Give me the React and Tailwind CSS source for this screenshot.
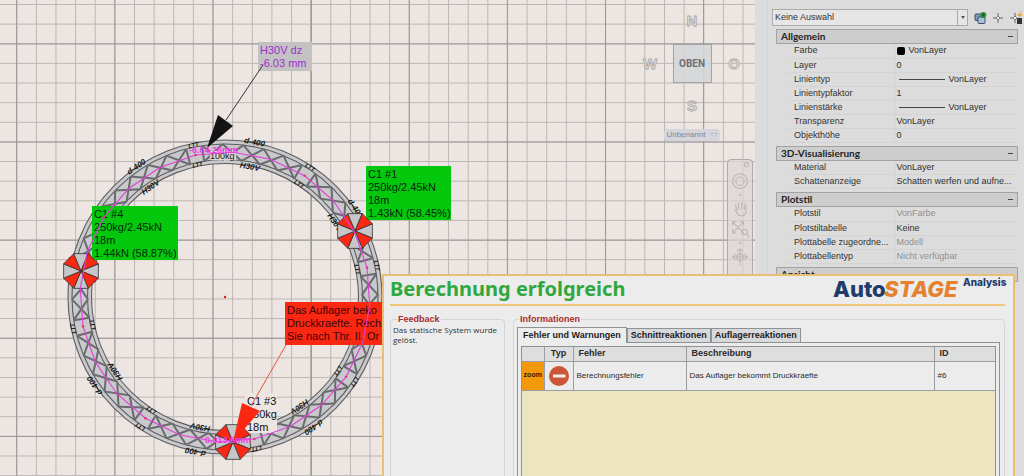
import React from "react";

const CX = 225;
const CY = 297;
const JOINTS = [0, 1, 2, 3, 4, 5, 6, 7].map((k) => -11.7 + 45 * k);

function polar(r, deg) {
  const a = (deg * Math.PI) / 180;
  return [CX + r * Math.sin(a), CY - r * Math.cos(a)];
}

function Bar({ from, to, className = "stroke-[#6a6b6e]", width = 2 }) {
  return (
    <line x1={from[0]} y1={from[1]} x2={to[0]} y2={to[1]} className={className} strokeWidth={width} />
  );
}

function RingText({ r, angle, size, children }) {
  const [x, y] = polar(r, angle);
  return (
    <text
      x={x}
      y={y}
      fontSize={size}
      textAnchor="middle"
      fontStyle="italic"
      fontWeight="bold"
      className="fill-[#161616]"
      transform={`rotate(${angle} ${x} ${y})`}
    >
      {children}
    </text>
  );
}

function TrussSegment({ start }) {
  const bays = [0, 1, 2, 3, 4];
  const step = 39 / bays.length;
  return (
    <g>
      <Bar from={polar(137, start - 3)} to={polar(153, start - 3)} />
      <Bar from={polar(137, start + 3)} to={polar(153, start + 3)} />
      {bays.map((b) => {
        const a = start + 3 + b * step;
        return (
          <g key={b}>
            <Bar from={polar(137, a)} to={polar(153, a + step)} />
            <Bar from={polar(153, a)} to={polar(137, a + step)} />
          </g>
        );
      })}
      <RingText r={155} angle={start + 22.5} size={8}>d-400</RingText>
      <RingText r={130} angle={start + 22.5} size={8}>H30V</RingText>
      <RingText r={153} angle={start} size={6}>LTT</RingText>
      <RingText r={133} angle={start} size={6}>LTT</RingText>
    </g>
  );
}

function Hoist({ x, y }) {
  const R = 18.8;
  const pt = (deg) => {
    const a = (deg * Math.PI) / 180;
    return `${x + R * Math.cos(a)},${y + R * Math.sin(a)}`;
  };
  return (
    <g strokeWidth="0.8" className="stroke-[#333333]">
      {[0, 1, 2, 3, 4, 5, 6, 7].map((k) => (
        <polygon
          key={k}
          points={`${x},${y} ${pt(k * 45 - 22.5)} ${pt(k * 45 + 22.5)}`}
          className={k % 2 ? "fill-[#fa2713]" : "fill-[#c6c5c7]"}
        />
      ))}
    </g>
  );
}

function Callout({ x, y, width, height, fill, color, lines }) {
  return (
    <g>
      <rect x={x} y={y} width={width} height={height} className={fill} />
      {lines.map((line, i) => (
        <text key={line} x={x + 2} y={y + 12 + i * 13} fontSize="11" className={color}>
          {line}
        </text>
      ))}
    </g>
  );
}

function Drawing() {
  const center = JOINTS.flatMap((a) => [polar(145, a), polar(145, a + 15), polar(145, a + 30)])
    .map((p) => p.join(","))
    .join(" ");
  return (
    <svg className="absolute inset-0 h-full w-full font-['Liberation_Sans',sans-serif]" role="img" aria-label="Grundriss">
      <defs>
        <pattern id="minor" x="16.2" y="4" width="19.63" height="19.63" patternUnits="userSpaceOnUse">
          <path d="M0.5 0V19.63M0 0.5H19.63" className="stroke-[#bcb6b4]" strokeWidth="1" fill="none" />
        </pattern>
        <pattern id="major" x="16.2" y="43.4" width="98.13" height="98.13" patternUnits="userSpaceOnUse">
          <path d="M0.5 0V98.13M0 0.5H98.13" className="stroke-[#9a9695]" strokeWidth="1" fill="none" />
        </pattern>
      </defs>
      <rect width="100%" height="100%" fill="url(#minor)" />
      <rect width="100%" height="100%" fill="url(#major)" />
      <line x1="311.3" y1="0" x2="311.3" y2="100%" className="stroke-[#7fae7c]" strokeWidth="1.2" />

      <circle cx={CX} cy={CY} r="145.5" fill="none" className="stroke-[#c9c8ca]" strokeWidth="23" />
      {[157, 153, 137.5, 133.5].map((r) => (
        <circle key={r} cx={CX} cy={CY} r={r} fill="none" className="stroke-[#5c5d60]" strokeWidth="1.1" />
      ))}
      {JOINTS.map((a) => (
        <TrussSegment key={a} start={a} />
      ))}
      <rect x="210" y="151" width="26" height="9" className="fill-[#dcd7d6]" />
      <text x="210" y="159" fontSize="9" className="fill-[#161616]">100kg</text>

      <Callout x={245} y={393} width={32} height={40} fill="fill-[#ede6e3]" color="fill-[#111111]" lines={["C1 #3", "250kg", "18m"]} />
      <Callout x={92} y={206} width={86} height={54} fill="fill-[#04c80c]" color="fill-[#04270a]" lines={["C1 #4", "250kg/2.45kN", "18m", "1.44kN (58.87%)"]} />
      <Callout x={366} y={166} width={85} height={54} fill="fill-[#04c80c]" color="fill-[#04270a]" lines={["C1 #1", "250kg/2.45kN", "18m", "1.43kN (58.45%)"]} />
      <Callout x={285} y={302} width={120} height={43} fill="fill-[#fa2713]" color="fill-[#3a0606]" lines={["Das Auflager beko", "Druckkraefte. Rech", "Sie nach Thr. II. Or"]} />
      <Callout x={258} y={42} width={54} height={29} fill="fill-[#c3c1c2]" color="fill-[#a02fd0]" lines={["H30V dz", "-6.03 mm"]} />

      <Hoist x={81} y={271} />
      <Hoist x={355} y={231} />
      <Hoist x={233} y={442} />

      <polygon points={center} fill="none" className="stroke-[#e13fdc]" strokeWidth="1.1" />
      {JOINTS.map((a) => {
        const [x, y] = polar(145, a);
        return <circle key={a} cx={x} cy={y} r="1.2" className="fill-[#e8306e]" />;
      })}
      <circle cx={CX} cy={CY} r="1.2" className="fill-[#d02020]" />

      <path d="M226 120L263 65" className="stroke-[#333333]" strokeWidth="1" />
      <polygon points="207,148 218,115 233,126" className="fill-[#141414]" />
      <path d="M251 406L286 345" className="stroke-[#ee5040]" strokeWidth="1" />
      <polygon points="233,442 242,403 260,411" className="fill-[#fa2713]" />
      <text x="189" y="153" fontSize="9" fontWeight="bold" className="fill-[#ee3be6]">-6.04.26mm</text>
      <text x="205" y="443" fontSize="9" fontWeight="bold" className="fill-[#ee3be6]">0.013.6mm</text>
    </svg>
  );
}

function Compass({ children }) {
  return (
    <svg viewBox="0 0 18 18" className="size-[18px]" aria-hidden="true">
      <text x="9" y="14" fontSize="15" fontWeight="bold" textAnchor="middle" className="fill-[#e6e0dd] stroke-[#aaa6a5] font-['Liberation_Sans',sans-serif]" strokeWidth="0.8">
        {children}
      </text>
    </svg>
  );
}

function ViewCube() {
  return (
    <div className="absolute top-3 right-3 flex flex-col items-center">
      <div className="grid grid-cols-[18px_66px_18px] items-center justify-items-center">
        <span />
        <Compass>N</Compass>
        <span />
        <Compass>W</Compass>
        <button className="my-3.5 size-[39px] border border-[#a3a4a6] bg-[#d5d6d9]/90 font-['Roboto',sans-serif] text-[10px] font-bold text-[#6c6f75]">
          OBEN
        </button>
        <Compass>O</Compass>
        <span />
        <Compass>S</Compass>
        <span />
      </div>
      <button className="mt-3.5 flex h-3 items-center gap-1 rounded-sm bg-[#d6d5dc] px-0.5 font-['Liberation_Sans',sans-serif] text-[8px] text-[#85858f]">
        Unbenannt
        <svg viewBox="0 0 8 5" className="h-1.5 w-2">
          <path d="M1 1H7L4 4Z" fill="#f1f0f3" stroke="#9a9aa5" strokeWidth="0.6" />
        </svg>
      </button>
    </div>
  );
}

function NavBar() {
  return (
    <div className="absolute top-[159px] right-0.5 h-32 w-[26px] rounded border border-[#aeaaa9] bg-[#dcd7d5]/70">
      <svg viewBox="0 0 26 116" className="w-full" fill="none" stroke="#b9b4b2" strokeWidth="1.1" aria-label="Navigationsleiste">
        <circle cx="20" cy="5" r="2.2" />
        <circle cx="13" cy="23" r="8" />
        <circle cx="13" cy="23" r="4.5" />
        <circle cx="13" cy="38" r="0.6" />
        <path d="M7 53L10 58C11 61 17 62 19 58L20 49M10 55L8 48M12 54L11 46M15 54L15 46M18 54L18 47" />
        <path d="M5 67L17 79M17 67L5 79M5 71V67H9M13 67H17V71M5 75V79H9" />
        <circle cx="18" cy="78" r="3" />
        <path d="M20 80L23 84" />
        <circle cx="13" cy="90" r="0.6" />
        <path d="M13 96V114M5 105H21M10 99L13 96L16 99M8 102L5 105L8 108M18 102L21 105L18 108" />
        <circle cx="13" cy="105" r="3.5" />
      </svg>
    </div>
  );
}

const SECTIONS = [
  {
    title: "Allgemein",
    rows: [
      { name: "Farbe", value: "VonLayer", swatch: true },
      { name: "Layer", value: "0" },
      { name: "Linientyp", value: "VonLayer", line: true },
      { name: "Linientypfaktor", value: "1" },
      { name: "Linienstärke", value: "VonLayer", line: true },
      { name: "Transparenz", value: "VonLayer" },
      { name: "Objekthöhe", value: "0" },
    ],
  },
  {
    title: "3D-Visualisierung",
    rows: [
      { name: "Material", value: "VonLayer" },
      { name: "Schattenanzeige", value: "Schatten werfen und aufne..." },
    ],
  },
  {
    title: "Plotstil",
    rows: [
      { name: "Plotstil", value: "VonFarbe", muted: true },
      { name: "Plotstiltabelle", value: "Keine" },
      { name: "Plottabelle zugeordne...", value: "Modell", muted: true },
      { name: "Plottabellentyp", value: "Nicht verfügbar", muted: true },
    ],
  },
  { title: "Ansicht", rows: [] },
];

function PropertySection({ title, rows }) {
  return (
    <section className="mt-[3px]">
      <button className="flex h-[15px] w-full items-center justify-between border border-[#a2a2a2] bg-[#cdcdcd] px-1 font-['Lato',sans-serif] text-[10px] font-bold text-[#222222]">
        {title}
        <span className="h-px w-[5px] bg-[#444444]" />
      </button>
      {rows.length > 0 && (
        <table className="ml-3 w-[230px] table-fixed">
          <tbody>
            {rows.map((row) => (
              <tr key={row.name} className="h-[14px] border-b border-[#d4d4d4] text-[9px] leading-[13px] whitespace-nowrap">
                <th scope="row" className="w-[106px] border-r border-[#d2d2d2] p-0 pl-1.5 text-left font-normal text-[#333333]">
                  {row.name}
                </th>
                <td className={row.muted ? "p-0 pl-0.5 text-[#909090]" : "p-0 pl-0.5 text-[#303030]"}>
                  <span className="flex items-center">
                    {row.swatch && <span className="mr-1 size-2 rounded-[2px] bg-black" />}
                    {row.line && <span className="mr-1 ml-0.5 h-px w-[46px] bg-[#444444]" />}
                    {row.value}
                  </span>
                </td>
              </tr>
            ))}
          </tbody>
        </table>
      )}
    </section>
  );
}

function PropertiesPanel() {
  return (
    <aside className="flex w-[269px] shrink-0 overflow-hidden bg-[#dcdcdc] font-['Liberation_Sans',sans-serif]">
      <div className="w-[13px] shrink-0 border-r border-[#d3d4d5] bg-[#dadcdd]" />
      <div className="w-[256px] shrink-0 pt-[9px]">
        <div className="flex h-[17px] items-center pl-1">
          <div className="relative flex h-[17px] w-[197px]">
            <select
              aria-label="Auswahl"
              className="block h-[17px] w-full appearance-none border border-[#ababab] bg-[#e6e6e6] py-0 pl-0.5 text-[9px] leading-[15px] text-[#333333]"
            >
              <option>Keine Auswahl</option>
            </select>
            <span className="pointer-events-none absolute inset-y-0 right-0 flex w-[11px] items-center justify-center border border-[#ababab]">
              <svg viewBox="0 0 4 3" className="h-[3px] w-1">
                <path d="M0 0H4L2 3Z" fill="#555555" />
              </svg>
            </span>
          </div>
          <button aria-label="PICKADD umschalten" className="ml-1.5">
            <svg viewBox="0 0 13 14" className="h-3.5 w-[13px]">
              <rect x="1" y="3" width="7" height="6.5" rx="1" fill="#7d99b8" stroke="#3c5068" />
              <rect x="4" y="6" width="7" height="6.5" rx="1" fill="#a8c0dc" stroke="#3c5068" />
              <circle cx="9.3" cy="4" r="3" fill="#2c8b3c" />
              <path d="M9.3 2.4V5.6M7.7 4H10.9" stroke="#1b5426" strokeWidth="0.9" />
            </svg>
          </button>
          <button aria-label="Objekte wählen" className="ml-[5px]">
            <svg viewBox="0 0 12 12" className="size-3" fill="none" stroke="#666666">
              <path d="M6 1V4.5M6 7.5V11M1 6H4.5M7.5 6H11" />
              <path d="M6 4L8 6L6 8L4 6Z" fill="#f4f4f4" strokeWidth="0.8" />
            </svg>
          </button>
          <button aria-label="Schnellauswahl" className="ml-1.5 shrink-0">
            <svg viewBox="0 0 14 14" className="size-3.5" fill="none" stroke="#666666">
              <path d="M5 2V5.5M5 8.5V12M0 7H3.5" />
              <path d="M5 5L7 7L5 9L3 7Z" fill="#f4f4f4" strokeWidth="0.8" />
              <path d="M11 0L7 5H10L8 8L13 3H10L12 0Z" fill="#eda63a" stroke="none" />
              <rect x="7" y="7" width="5" height="6" fill="#333333" stroke="none" />
            </svg>
          </button>
        </div>
        <div className="pl-2 pr-1.5">
          {SECTIONS.map((s) => (
            <PropertySection key={s.title} {...s} />
          ))}
        </div>
      </div>
    </aside>
  );
}

function Logo() {
  return (
    <svg viewBox="0 0 178 26" className="-mr-1 h-[26px] w-[178px] shrink-0" role="img" aria-label="AutoSTAGE Analysis">
      <g className="font-['Inter',sans-serif]" fontWeight="800">
        <text x="2" y="21" fontSize="22" className="fill-[#213c6c]">Auto</text>
        <text x="53" y="21" fontSize="22" fontStyle="italic" className="fill-[#e5812f]">STAGE</text>
        <text x="132" y="10" fontSize="10" className="fill-[#213c6c]">Analysis</text>
      </g>
    </svg>
  );
}

function ResultDialog() {
  return (
    <div
      role="dialog"
      aria-label="Berechnung erfolgreich"
      className="absolute top-[274px] right-[9px] bottom-0 left-[382px] flex flex-col border-x-2 border-t-2 border-[#e9bf74] bg-[#ececec] pr-2 pl-1.5 font-['Liberation_Sans',sans-serif]"
    >
      <header className="flex h-[30px] shrink-0 items-start justify-between border-b-2 border-[#f0c779]">
        <h1 className="font-['Noto_Sans',sans-serif] text-[20px] leading-[26px] font-bold text-[#31a83e]">
          Berechnung erfolgreich
        </h1>
        <Logo />
      </header>
      <div className="flex min-h-0 flex-1 gap-2 pt-[7px]">
        <fieldset className="-mb-1 w-[115px] shrink-0 rounded border border-[#d2d5da] px-0.5">
          <legend className="ml-1 px-px text-[9px] leading-3 font-bold text-[#a82c2c]">Feedback</legend>
          <p className="font-['Open_Sans',sans-serif] text-[8px] leading-[10px] text-[#333333]">
            Das statische System wurde gelöst.
          </p>
        </fieldset>
        <fieldset className="-mb-1 flex min-w-0 flex-1 flex-col rounded border border-[#d2d5da] pr-1 pl-[3px]">
          <legend className="ml-0.5 px-px text-[9px] leading-3 font-bold text-[#a82c2c]">Informationen</legend>
          <div className="flex h-full flex-col pt-0.5">
            <div role="tablist" className="flex items-end text-[9px] font-bold whitespace-nowrap text-[#1c1c1c]">
              <button role="tab" aria-selected="true" className="relative z-10 -mb-px h-4 border border-b-0 border-[#8e9195] bg-[#ececec] px-[5px]">
                Fehler und Warnungen
              </button>
              <button role="tab" aria-selected="false" className="h-[14px] border border-b-0 border-[#8e9195] bg-[#d9d9db] px-[3px]">
                Schnittreaktionen
              </button>
              <button role="tab" aria-selected="false" className="h-[14px] border border-b-0 border-[#8e9195] bg-[#d9d9db] px-[3px]">
                Auflagerreaktionen
              </button>
            </div>
            <div role="tabpanel" className="flex-1 border border-[#8e9195] px-[3px] pt-[3px]">
              <div className="h-full border border-[#8e9195] bg-[#ece5bf]">
                <table className="w-full table-fixed bg-[#ececec] text-left text-[8px] text-[#2a2a2a]">
                  <thead>
                    <tr className="h-[14px] border-b border-[#9b9ea2] bg-[#dededf] text-[9px] leading-[13px]">
                      <th className="w-[22px] border-r border-[#9b9ea2] p-0" aria-label="Zoom" />
                      <th className="w-[29px] border-r border-[#9b9ea2] p-0 text-center">Typ</th>
                      <th className="w-[113px] border-r border-[#9b9ea2] p-0 pl-[5px]">Fehler</th>
                      <th className="border-r border-[#9b9ea2] p-0 pl-[5px]">Beschreibung</th>
                      <th className="w-[61px] p-0 pl-[5px]">ID</th>
                    </tr>
                  </thead>
                  <tbody>
                    <tr className="h-[29px] border-b border-[#9b9ea2]">
                      <td className="border-r border-[#9b9ea2] p-0">
                        <button className="block h-7 w-full bg-[#f5990c] text-center text-[7px] font-bold text-[#2c1a00]">zoom</button>
                      </td>
                      <td className="border-r border-[#9b9ea2] p-0">
                        <svg viewBox="0 0 20 20" className="mx-auto size-5" role="img" aria-label="Fehler">
                          <circle cx="10" cy="10" r="10" fill="#cb5638" />
                          <rect x="4" y="8.5" width="12.5" height="3" fill="#f6efec" />
                        </svg>
                      </td>
                      <td className="border-r border-[#9b9ea2] p-0 pl-[3px]">Berechnungsfehler</td>
                      <td className="border-r border-[#9b9ea2] p-0 pl-[3px]">Das Auflager bekommt Druckkraefte</td>
                      <td className="p-0 pl-[3px]">#6</td>
                    </tr>
                  </tbody>
                </table>
              </div>
            </div>
          </div>
        </fieldset>
      </div>
    </div>
  );
}

export default function App() {
  return (
    <div className="relative flex h-screen overflow-hidden bg-[#dcdcdc]">
      <main className="relative min-w-0 flex-1 overflow-hidden bg-[#ece5e1]">
        <Drawing />
        <ViewCube />
        <NavBar />
      </main>
      <PropertiesPanel />
      <ResultDialog />
    </div>
  );
}
